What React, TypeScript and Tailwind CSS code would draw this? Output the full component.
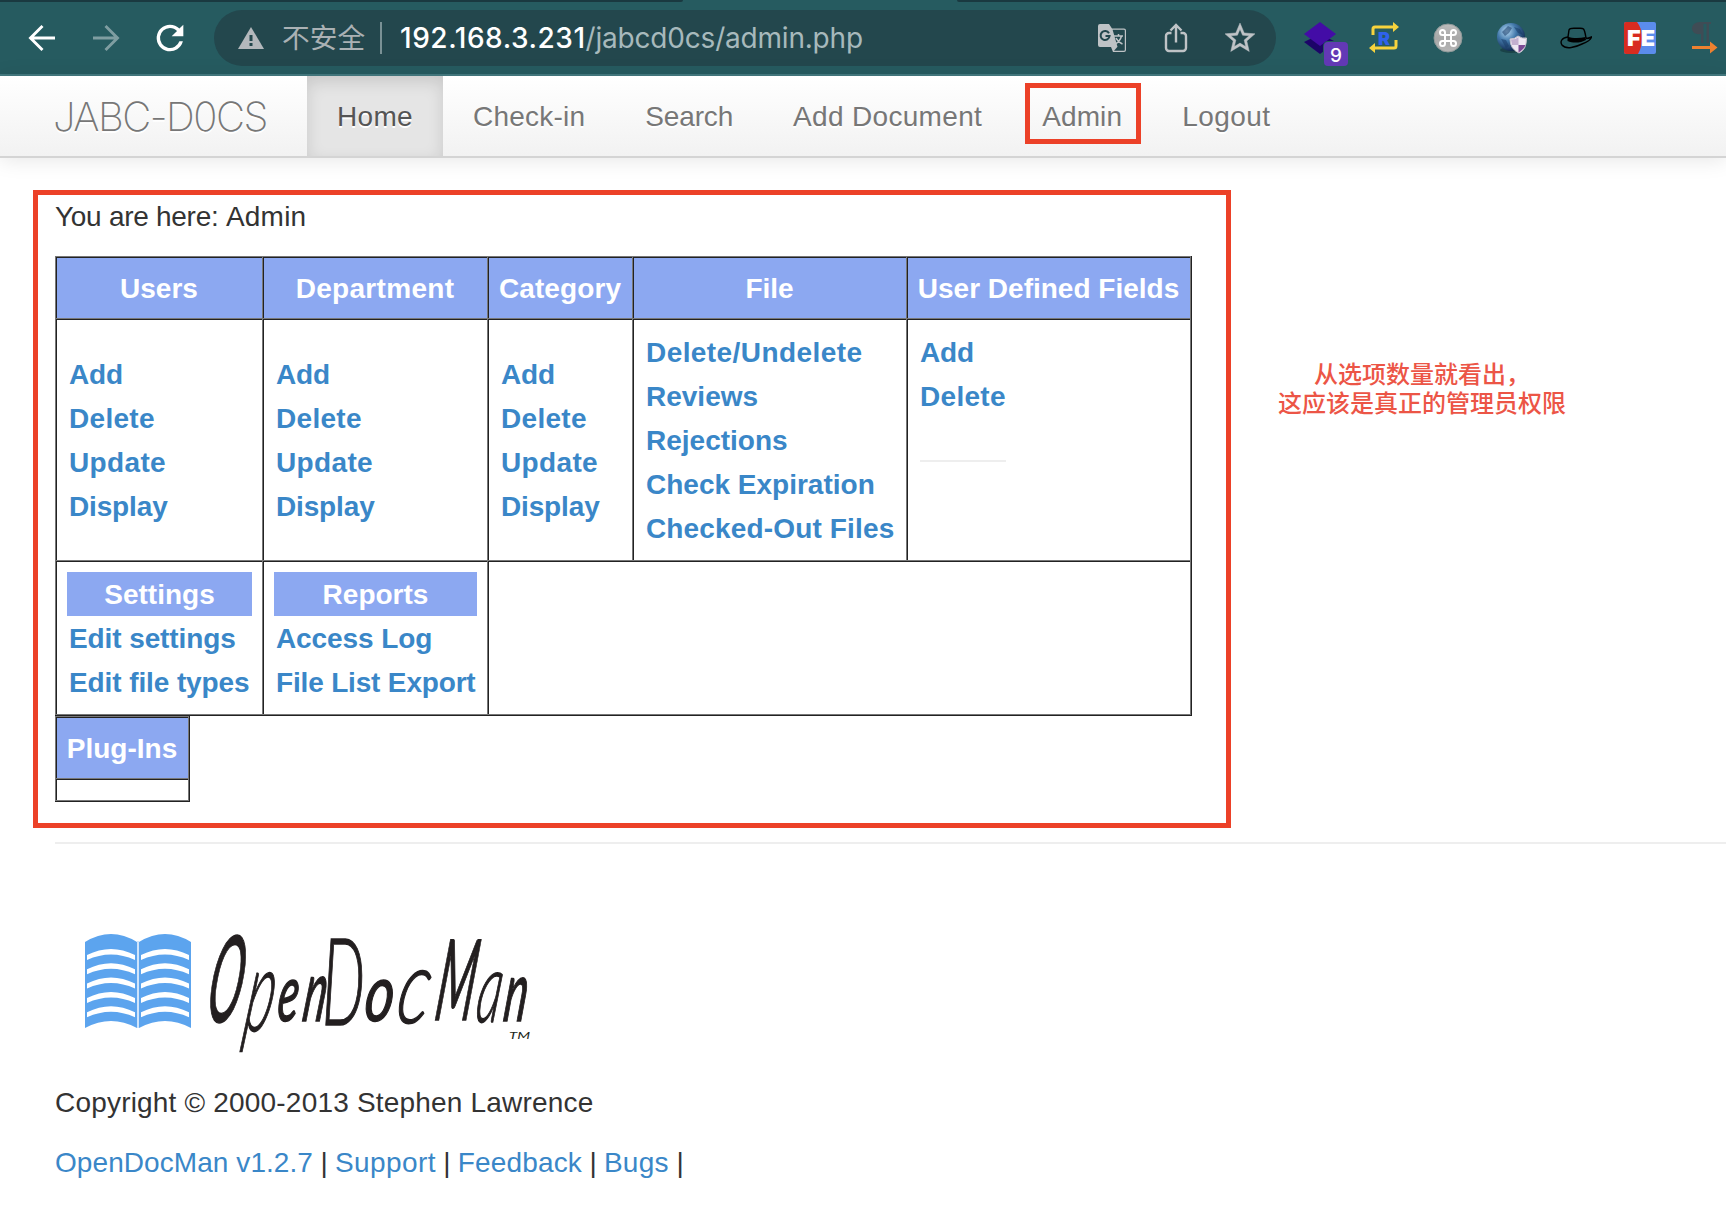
import { type ReactNode } from "react";

const Slot = ({ children }: { children: ReactNode }) => (
  <div className="flex h-14 w-16 shrink-0 items-center justify-center">{children}</div>
);

// Letter spacing of each label
const tracking: Record<string, string> = {
  Home: "tracking-[0.33px]",
  "Check-in": "tracking-[0.22px]",
  Search: "tracking-[-0.15px]",
  "Add Document": "tracking-[0.32px]",
  Admin: "tracking-[0.12px]",
  Logout: "tracking-[0.45px]",
  Department: "tracking-[0.3px]",
  Category: "tracking-[0.1px]",
  Add: "tracking-[-0.15px]",
  Delete: "tracking-[0.3px]",
  Update: "tracking-[0.35px]",
  Display: "tracking-[-0.15px]",
  "Delete/Undelete": "tracking-[0.42px]",
  "Checked-Out Files": "tracking-[0.15px]",
  "Edit settings": "tracking-[-0.1px]",
  "Edit file types": "tracking-[-0.1px]",
  "Access Log": "tracking-[-0.1px]",
  "File List Export": "tracking-[-0.17px]",
  "OpenDocMan v1.2.7": "tracking-[0.07px]",
  Support: "tracking-[0.4px]",
  Feedback: "tracking-[0.15px]",
  Bugs: "tracking-[0.3px]",
};

const Label = ({ children }: { children: string }) => <span className={tracking[children]}>{children}</span>;

function Toolbar() {
  return (
    <header className="h-[76px] border-b-2 border-[#447a80] bg-[#265b60]">
      <div className="flex h-0.5 justify-between">
        <div className="w-[683px] rounded-br bg-[#1a3940]" />
        <div className="w-[769px] rounded-bl bg-[#1a3940]" />
      </div>
      <div className="flex h-[72px] items-center overflow-hidden pl-[10px]">
        <Slot>
          <svg width="28" height="28" viewBox="0 0 28 28" fill="none" stroke="#fff" strokeWidth="2.9">
            <path d="M27 14H3M14.5 2L2.5 14l12 12" />
          </svg>
        </Slot>
        <Slot>
          <svg width="28" height="28" viewBox="0 0 28 28" fill="none" stroke="#7f9ea1" strokeWidth="2.9">
            <path d="M1 14h24M13.500 2L25.500 14l-12 12" />
          </svg>
        </Slot>
        <Slot>
          <svg width="40" height="40" viewBox="0 0 24 24" fill="#fff">
            <path d="M17.65 6.35A7.958 7.958 0 0 0 12 4a8 8 0 1 0 7.73 10h-2.080A6 6 0 1 1 12 6c1.660 0 3.140.69 4.220 1.780L13 11h7V4l-2.350 2.350z" />
          </svg>
        </Slot>
        <div className="ml-3 flex h-14 w-[1062px] shrink-0 items-center rounded-full bg-[#23474d] pr-1 pl-6">
          <svg width="26" height="22" viewBox="0 0 26 22">
            <path d="M13 0l13 22H0z" fill="#b3b8bc" />
            <path d="M11.500 8h3v6h-3zM11.500 16h3v3h-3z" fill="#23474d" />
          </svg>
          <span className="ml-[18px] h-14 w-[84px] font-['Noto_Sans_CJK_SC',sans-serif] text-[27.700px] leading-[53px] whitespace-nowrap text-[#aab1b4]">
            不安全
          </span>
          <div className="ml-[14px] h-8 w-0.5 bg-[#7a9195]" />
          <span className="ml-[18px] font-['Inter',sans-serif] text-[28px] leading-[56px] whitespace-nowrap text-[#a7b9bc]">
            <span className="font-medium tracking-[0.55px] text-white">192.168.3.231</span>
            <span className="tracking-[-0.2px]">/jabcd0cs/admin.php</span>
          </span>
          <div className="ml-auto flex">
            <Slot>
              <svg width="28" height="28" viewBox="0 0 28 28">
                <path d="M2 0h9l3 4.500h12a2 2 0 0 1 2 2v19.500a2 2 0 0 1-2 2H15l-2-5H2a2 2 0 0 1-2-2V2a2 2 0 0 1 2-2z" fill="#bfc3c6" />
                <path d="M14.600 5.700H26a.8.800 0 0 1 .8.800v19.500a.8.800 0 0 1-.8.800H16l3.500-4z" fill="#23474d" />
                <path d="M11 9.200A4.500 4.500 0 1 0 11.600 12H7.500" fill="none" stroke="#23474d" strokeWidth="2" />
                <path d="M16 12h9M20.500 10v2M23.500 12c-1 4-3 6-6 8M18 14c1.500 3 4 5 6.500 6" fill="none" stroke="#bfc3c6" strokeWidth="1.500" />
              </svg>
            </Slot>
            <Slot>
              <svg width="24" height="30" viewBox="0 0 24 30" fill="none" stroke="#bfc3c6" strokeWidth="2.400">
                <path d="M7.500 10H5a3 3 0 0 0-3 3v12a3 3 0 0 0 3 3h14a3 3 0 0 0 3-3V13a3 3 0 0 0-3-3h-2.500M12 19.500V3M6.500 7.500L12 2l5.500 5.500" />
              </svg>
            </Slot>
            <Slot>
              <svg width="36" height="36" viewBox="0 0 24 24" fill="#bfc3c6" stroke="#bfc3c6" strokeWidth=".3">
                <path d="M22 9.240l-7.190-.62L12 2 9.190 8.630 2 9.240l5.460 4.730L5.820 21 12 17.270 18.180 21l-1.630-7.030L22 9.240zM12 15.400l-3.760 2.270 1-4.280-3.320-2.880 4.380-.38L12 6.100l1.710 4.040 4.380.38-3.320 2.880 1 4.280L12 15.400z" />
              </svg>
            </Slot>
          </div>
        </div>
        <div className="ml-3 flex">
          <Slot>
            <div className="relative h-8 w-8">
              <svg width="32" height="32" viewBox="0 0 32 32">
                <path d="M0 20l16-8 16 8-16 12z" fill="#1c0468" />
                <path d="M16 0l16 12-16 12L0 12z" fill="#430ca6" />
              </svg>
              <span className="absolute top-5 left-5 h-6 w-6 rounded bg-[#6339b5] text-center font-['Inter',sans-serif] text-[19px] leading-[27px] font-medium text-white ring-1 ring-[#265b60]">
                9
              </span>
            </div>
          </Slot>
          <Slot>
            <svg width="30" height="32" viewBox="0 0 30 32">
              <path d="M4 13V7a2 2 0 0 1 2-2h18M27 18v6a2 2 0 0 1-2 2H5" fill="none" stroke="#f7d33d" strokeWidth="3" />
              <path d="M24 0l6 5-6 5zM6 21l-6 5 6 5z" fill="#f7d33d" />
              <text x="9" y="22.500" fontFamily="Inter, sans-serif" fontWeight="900" fontSize="18" fill="#2f62ec">R</text>
            </svg>
          </Slot>
          <Slot>
            <svg width="30" height="30" viewBox="0 0 30 30">
              <defs>
                <linearGradient id="cmd" x1="0" y1="0" x2="0" y2="1">
                  <stop offset="0" stopColor="#bdbdbd" />
                  <stop offset=".5" stopColor="#a8a8a8" />
                  <stop offset="1" stopColor="#b5b5b5" />
                </linearGradient>
              </defs>
              <circle cx="15" cy="15" r="14" fill="url(#cmd)" stroke="#8e9999" />
              <path d="M12 12h6v6h-6zM12 12H9.500A2.500 2.500 0 1 1 12 9.500zM18 12V9.500A2.500 2.500 0 1 1 20.500 12zM18 18h2.500A2.500 2.500 0 1 1 18 20.500zM12 18v2.500A2.500 2.500 0 1 1 9.500 18z" fill="none" stroke="#fff" strokeWidth="2" />
            </svg>
          </Slot>
          <Slot>
            <svg width="32" height="32" viewBox="0 0 32 32">
              <defs>
                <radialGradient id="globe" cx=".35" cy=".3" r=".75">
                  <stop offset="0" stopColor="#b9dcf5" />
                  <stop offset=".45" stopColor="#4379ab" />
                  <stop offset="1" stopColor="#0c2348" />
                </radialGradient>
              </defs>
              <ellipse cx="15" cy="28" rx="11" ry="3" fill="#1a4248" />
              <circle cx="15" cy="15" r="14" fill="url(#globe)" />
              <path d="M6 10l6-6 4 2-3 5-4 3zM18 5l6 2 3 6-5-2zM5 17l5 1 3 6-3 2z" fill="#173a66" opacity=".55" />
              <path d="M14 17q5 0 8-3 4 3 8.500 2 0 12-7.500 15-9-4-9-14z" fill="#eee8f2" stroke="#c9c3cd" />
              <path d="M15 17.500q5 0 7.500-2.500v8H16z" fill="#c3b0cf" />
              <path d="M22.500 23H29.500q-2 5-7 7.500z" fill="#7b4a94" />
            </svg>
          </Slot>
          <Slot>
            <svg width="32" height="22" viewBox="0 0 32 22">
              <path d="M8 10C1 11 0 15 2 18c4 5 14 2 20-1 5-2 9-4 9.500-7-2 1-4 1.500-5.500 1.500M8 10l1-7c.5-2 3-2 7-1.700 3 .2 6-.8 7.500.7 1.500 2 2 6 2.500 9" fill="none" stroke="#000" strokeWidth="1.400" />
              <path d="M7.500 9.500c5 2 12 2 18 .5l.5 3c-5 3-13 3.500-18.500 1z" />
            </svg>
          </Slot>
          <Slot>
            <svg width="32" height="32" viewBox="0 0 32 32">
              <rect width="32" height="32" rx="2" fill="#5b8cec" />
              <path d="M2 0h11c6 7 7 22 1 32H2a2 2 0 0 1-2-2V2a2 2 0 0 1 2-2z" fill="#d82c20" />
              <text x="3" y="24" fontFamily="Inter, sans-serif" fontWeight="900" fontSize="22" textLength="28" lengthAdjust="spacingAndGlyphs" fill="#fff">FE</text>
            </svg>
          </Slot>
          <Slot>
            <svg width="28" height="32" viewBox="0 0 28 32">
              <path d="M21 0v2h-2v19h-2.500V2h-3v19H11V12C4 13 2 9 2 6.500S4 0 10 0z" fill="#3f4c55" />
              <path d="M2 24h18v-4.500l7.500 6-7.500 6V27H2z" fill="#ee8130" />
            </svg>
          </Slot>
        </div>
      </div>
    </header>
  );
}

const redBox = "pointer-events-none absolute border-[5px] border-[#ec4128]";
const navItem = "h-20 px-[30px] leading-[82px]";

function NavBar() {
  return (
    <nav className="relative z-10 flex h-[82px] border-b-2 border-[#d4d4d4] bg-linear-to-b from-white to-[#f2f2f2] pl-[53px] whitespace-nowrap text-[#777] shadow-[0_2px_20px_rgba(0,0,0,0.1)] [text-shadow:0_2px_0_#fff]">
      <div className="h-20 w-[254px] font-['Inter',sans-serif] text-[40px] leading-[82px] font-extralight tracking-[-1.500px]">
        JABC-D0CS
      </div>
      <div className="h-20 bg-[#e5e5e5] px-[30px] leading-[82px] text-[#555] shadow-[inset_0_6px_16px_rgba(0,0,0,0.125)]">
        <Label>Home</Label>
      </div>
      <div className={navItem}><Label>Check-in</Label></div>
      <div className={navItem}><Label>Search</Label></div>
      <div className={navItem}><Label>Add Document</Label></div>
      <div className="relative h-20 px-[30px] leading-[82px]">
        <Label>Admin</Label>
        <div className={`${redBox} top-[7px] left-[13px] h-[61px] w-[116px]`} />
      </div>
      <div className={navItem}><Label>Logout</Label></div>
    </nav>
  );
}

const cell = "border-t border-l border-[#777] bg-white shadow-[inset_1px_1px_0_#222]";
const head = "flex items-center justify-center border-t border-l border-[#777] bg-[#8ca8f1] pt-0.5 text-white shadow-[inset_1px_1px_0_#222]";
const frame = "grid w-max border-r border-b border-[#222] bg-[#777] pr-px pb-px font-bold leading-[46px] whitespace-nowrap";

function Links({ items }: { items: string[] }) {
  return (
    <div className={`${cell} flex flex-col justify-center pt-px pl-[13px] text-[#3a87c8]`}>
      {items.map((t) => (
        <a key={t} className="h-11"><Label>{t}</Label></a>
      ))}
    </div>
  );
}

function Group({ title, items }: { title: string; items: string[] }) {
  return (
    <div className={`${cell} flex flex-col pt-[11px] pr-[10px] pl-[11px]`}>
      <div className="h-11 bg-[#8ca8f1] text-center text-white">{title}</div>
      {items.map((t) => (
        <a key={t} className="h-11 pl-0.5 text-[#3a87c8]"><Label>{t}</Label></a>
      ))}
    </div>
  );
}

const crud = ["Add", "Delete", "Update", "Display"];

function AdminTables() {
  return (
    <>
      <div className={`${frame} grid-cols-[207px_225px_145px_274px_284px] grid-rows-[62px_242px_154px]`}>
        {["Users", "Department", "Category", "File", "User Defined Fields"].map((t) => (
          <div key={t} className={head}><Label>{t}</Label></div>
        ))}
        <Links items={crud} />
        <Links items={crud} />
        <Links items={crud} />
        <Links items={["Delete/Undelete", "Reviews", "Rejections", "Check Expiration", "Checked-Out Files"]} />
        <div className={`${cell} flex flex-col pt-[11px] pl-[13px] text-[#3a87c8]`}>
          <a className="h-11"><Label>Add</Label></a>
          <a className="h-11"><Label>Delete</Label></a>
          <div className="mt-[42px] h-0.5 w-[86px] bg-[#eee]" />
        </div>
        <Group title="Settings" items={["Edit settings", "Edit file types"]} />
        <Group title="Reports" items={["Access Log", "File List Export"]} />
        <div className={`${cell} col-span-3`} />
      </div>
      <div className={`${frame} grid-cols-[133px] grid-rows-[62px_22px]`}>
        <div className={head}>Plug-Ins</div>
        <div className={cell} />
      </div>
    </>
  );
}

const arcs = [0, 14.3, 28.6, 42.9, 57.2];

// Condensed, slanted wordmark: [glyph, x, baseline, x scale, size, skew, weight]
const letters: [string, number, number, number, number, number, number][] = [
  ["O", 204, 1022, 0.38, 120, -9, 400],
  ["p", 242, 1031, 0.47, 116, -9, 300],
  ["e", 276, 1021, 0.54, 80, -6, 400],
  ["n", 301, 1021, 0.5, 86, -8, 400],
  ["D", 322, 1025, 0.5, 121, 0, 300],
  ["o", 363, 1021, 0.7, 80, -6, 400],
  ["c", 394, 1023, 0.68, 104, -9, 300],
  ["M", 433, 1020, 0.4, 112, -8, 400],
  ["a", 474, 1022, 0.5, 98, -8, 300],
  ["n", 502, 1021, 0.52, 84, -7, 400],
];

function Logo() {
  return (
    <svg className="block" width="640" height="238" viewBox="55 844 640 238">
      {[0, 54].map((dx) => (
        <g key={dx} transform={`translate(${dx} 0)`}>
          <path d="M85 942Q111 926 137 942V1028Q111 1014 85 1028Z" fill="#5ca4ee" />
          {arcs.map((dy) => (
            <path key={dy} transform={`translate(0 ${dy})`} d="M87 955Q111 943 135 955V960Q111 949 87 960Z" fill="#fff" />
          ))}
        </g>
      ))}
      <path d="M138 941V1028" stroke="#cfe4fb" strokeWidth="2" />
      <g fill="#231f20" stroke="#231f20" fontFamily="Lato, sans-serif" fontStyle="italic">
        {letters.map(([c, x, y, sx, size, skew, weight], i) => (
          <text key={i} fontSize={size} fontWeight={weight} strokeWidth="1.500" transform={`translate(${x} ${y}) skewX(${skew}) scale(${sx} 1)`}>{c}</text>
        ))}
        <text x="509" y="1039" fontSize="9" strokeWidth="0" textLength="21" lengthAdjust="spacingAndGlyphs">TM</text>
      </g>
    </svg>
  );
}

const FooterLink = ({ children }: { children: string }) => (
  <a className="text-[#3a87c8]"><Label>{children}</Label></a>
);

export default function App() {
  return (
    <div className="h-[1230px] w-[1726px] overflow-hidden bg-white font-['Liberation_Sans',Arial,sans-serif] text-[28px] text-[#333]">
      <Toolbar />
      <NavBar />
      <main className="relative pl-[55px]">
        <div className="pt-[39px] pb-[19px] leading-[40px]">
          <span className="tracking-[-0.280px]">You are here: </span>
          <span className="tracking-[0.2px]">Admin</span>
        </div>
        <AdminTables />
        <div className="mt-10 h-0.5 bg-[#eee]" />
        <Logo />
        <div className="h-10 leading-[42px] tracking-[0.19px]">Copyright © 2000-2013 Stephen Lawrence</div>
        <div className="mt-5 h-10 leading-[42px] tracking-[-0.300px] whitespace-nowrap">
          <FooterLink>OpenDocMan v1.2.7</FooterLink> | <FooterLink>Support</FooterLink> |{" "}
          <FooterLink>Feedback</FooterLink> | <FooterLink>Bugs</FooterLink> |
        </div>
        <div className={`${redBox} top-[32px] left-[33px] h-[638px] w-[1198px]`} />
        <div className="absolute top-[200px] left-[1272px] w-[300px] text-center font-['Noto_Sans_CJK_SC',sans-serif] text-[24px] leading-[29px] font-medium text-[#ec5546]">
          <p>从选项数量就看出，</p>
          <p>这应该是真正的管理员权限</p>
        </div>
      </main>
    </div>
  );
}
